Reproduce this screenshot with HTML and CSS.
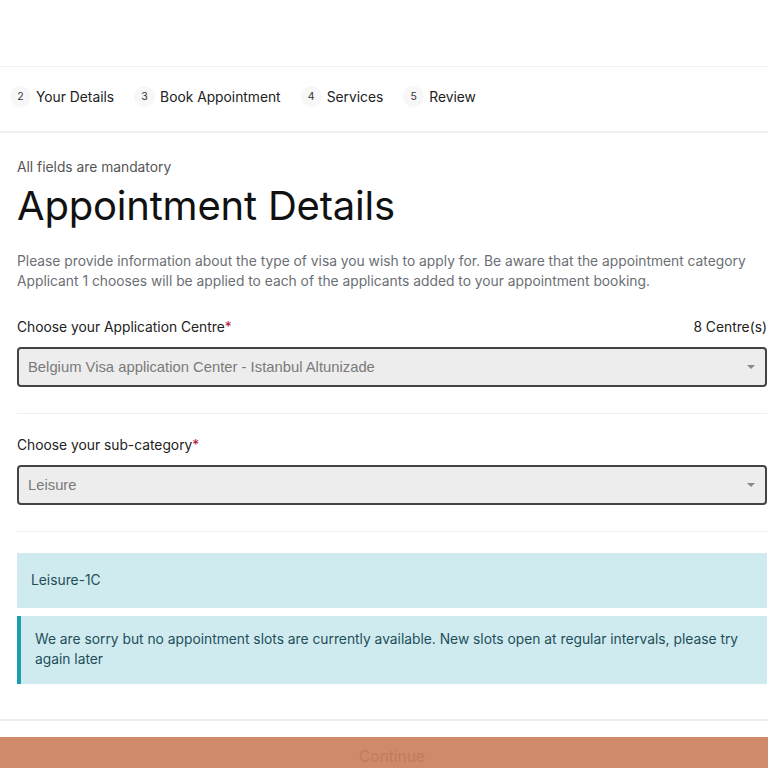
FILE: index.html
```html
<!DOCTYPE html>
<html lang="en">
<head>
<meta charset="utf-8">
<title>Appointment Details</title>
<link rel="stylesheet" href="styles.css">
</head>
<body>
<div class="topbar"></div>
<nav class="steps">
  <div class="step"><span class="num">2</span><span class="label">Your Details</span></div>
  <div class="step"><span class="num">3</span><span class="label">Book Appointment</span></div>
  <div class="step"><span class="num">4</span><span class="label">Services</span></div>
  <div class="step"><span class="num">5</span><span class="label">Review</span></div>
</nav>
<main class="content">
  <p class="mandatory">All fields are mandatory</p>
  <h1 class="title">Appointment Details</h1>
  <p class="intro">Please provide information about the type of visa you wish to apply for. Be aware that the appointment category Applicant 1 chooses will be applied to each of the applicants added to your appointment booking.</p>

  <div class="field">
    <div class="field-head">
      <label class="field-label">Choose your Application Centre<span class="req">*</span></label>
      <span class="count">8 Centre(s)</span>
    </div>
    <div class="select"><span class="select-value">Belgium Visa application Center - Istanbul Altunizade</span><span class="caret"></span></div>
  </div>
  <hr class="divider">

  <div class="field">
    <div class="field-head">
      <label class="field-label">Choose your sub-category<span class="req">*</span></label>
    </div>
    <div class="select"><span class="select-value">Leisure</span><span class="caret"></span></div>
  </div>
  <hr class="divider">

  <div class="alert alert-plain">Leisure-1C</div>
  <div class="alert alert-bar">We are sorry but no appointment slots are currently available. New slots open at regular intervals, please try again later</div>
</main>
<div class="footer-sep"></div>
<div class="action-bar"><button class="continue" type="button">Continue</button></div>
</body>
</html>
```

FILE: styles.css
```css
* { box-sizing: border-box; }
html, body { margin: 0; padding: 0; background: #fff; }
body {
  font-family: Inter, "Noto Sans", "Liberation Sans", sans-serif;
  color: #222;
  width: 768px;
  height: 768px;
  overflow: hidden;
}
.topbar { height: 66px; }
.steps {
  height: 67px;
  border-top: 1px solid #f1f1f1;
  border-bottom: 2px solid #f0f0f0;
  display: flex;
  align-items: center;
  gap: 20px;
  padding: 0 0 5px 10px;
}
.step { display: flex; align-items: center; gap: 5px; }
.num {
  width: 21px;
  height: 21px;
  border-radius: 50%;
  background: #f7f7f7;
  font-size: 10.5px;
  color: #333;
  display: flex;
  align-items: center;
  justify-content: center;
}
.label { font-size: 13.8px; color: #222; }
.content { padding: 23px 1px 0 17px; }
.mandatory { margin: 0; font-size: 13.8px; color: #555; line-height: 22px; }
.title {
  margin: 4px 0 0;
  font-size: 40px;
  font-weight: 400;
  color: #111;
  line-height: 48px;
  letter-spacing: -0.2px;
}
.intro {
  margin: 21px 0 0;
  font-size: 13.8px;
  line-height: 20px;
  color: #6b6f75;
  padding-right: 10px;
}
.field { margin-top: 26px; }
.field-head {
  display: flex;
  justify-content: space-between;
  align-items: center;
  font-size: 13.8px;
  line-height: 20px;
}
.field-label { color: #222; }
.req { color: #b0103a; }
.count { color: #222; }
.select {
  margin-top: 10px;
  height: 40px;
  border: 2px solid #444;
  border-radius: 4px;
  background: #ededed;
  display: flex;
  align-items: center;
  justify-content: space-between;
  padding: 0 10px 0 9px;
}
.select-value {
  font-family: "Liberation Sans", Arial, sans-serif;
  font-size: 14.8px;
  color: #7a7a7a;
}
.caret {
  width: 0; height: 0;
  border-left: 4px solid transparent;
  border-right: 4px solid transparent;
  border-top: 4px solid #8a8a8a;
}
.divider {
  margin: 26px 0 0;
  border: 0;
  border-top: 1px solid #eeeeee;
}
.divider + .field { margin-top: 21px; }
.divider + .alert { margin-top: 21px; }
.alert {
  background: #d0ebf0;
  color: #1e4e58;
  font-size: 13.8px;
  line-height: 20px;
}
.alert-plain { height: 55px; padding: 17px 14px; }
.alert-bar {
  margin-top: 8px;
  border-left: 4px solid #1a9db0;
  padding: 13px 20px 15px 14px;
}
.footer-sep {
  height: 37px;
  border-bottom: 2px solid #ececec;
}
.action-bar {
  margin-top: 16px;
  background: #ce8a69;
  height: 40px;
  display: flex;
  justify-content: center;
  padding: 9px 0 0 16px;
}
.continue {
  border: 0;
  background: transparent;
  font-family: Inter, "Liberation Sans", sans-serif;
  font-size: 15.5px;
  color: #c17c5c;
  padding: 0;
  height: 20px;
}
```
